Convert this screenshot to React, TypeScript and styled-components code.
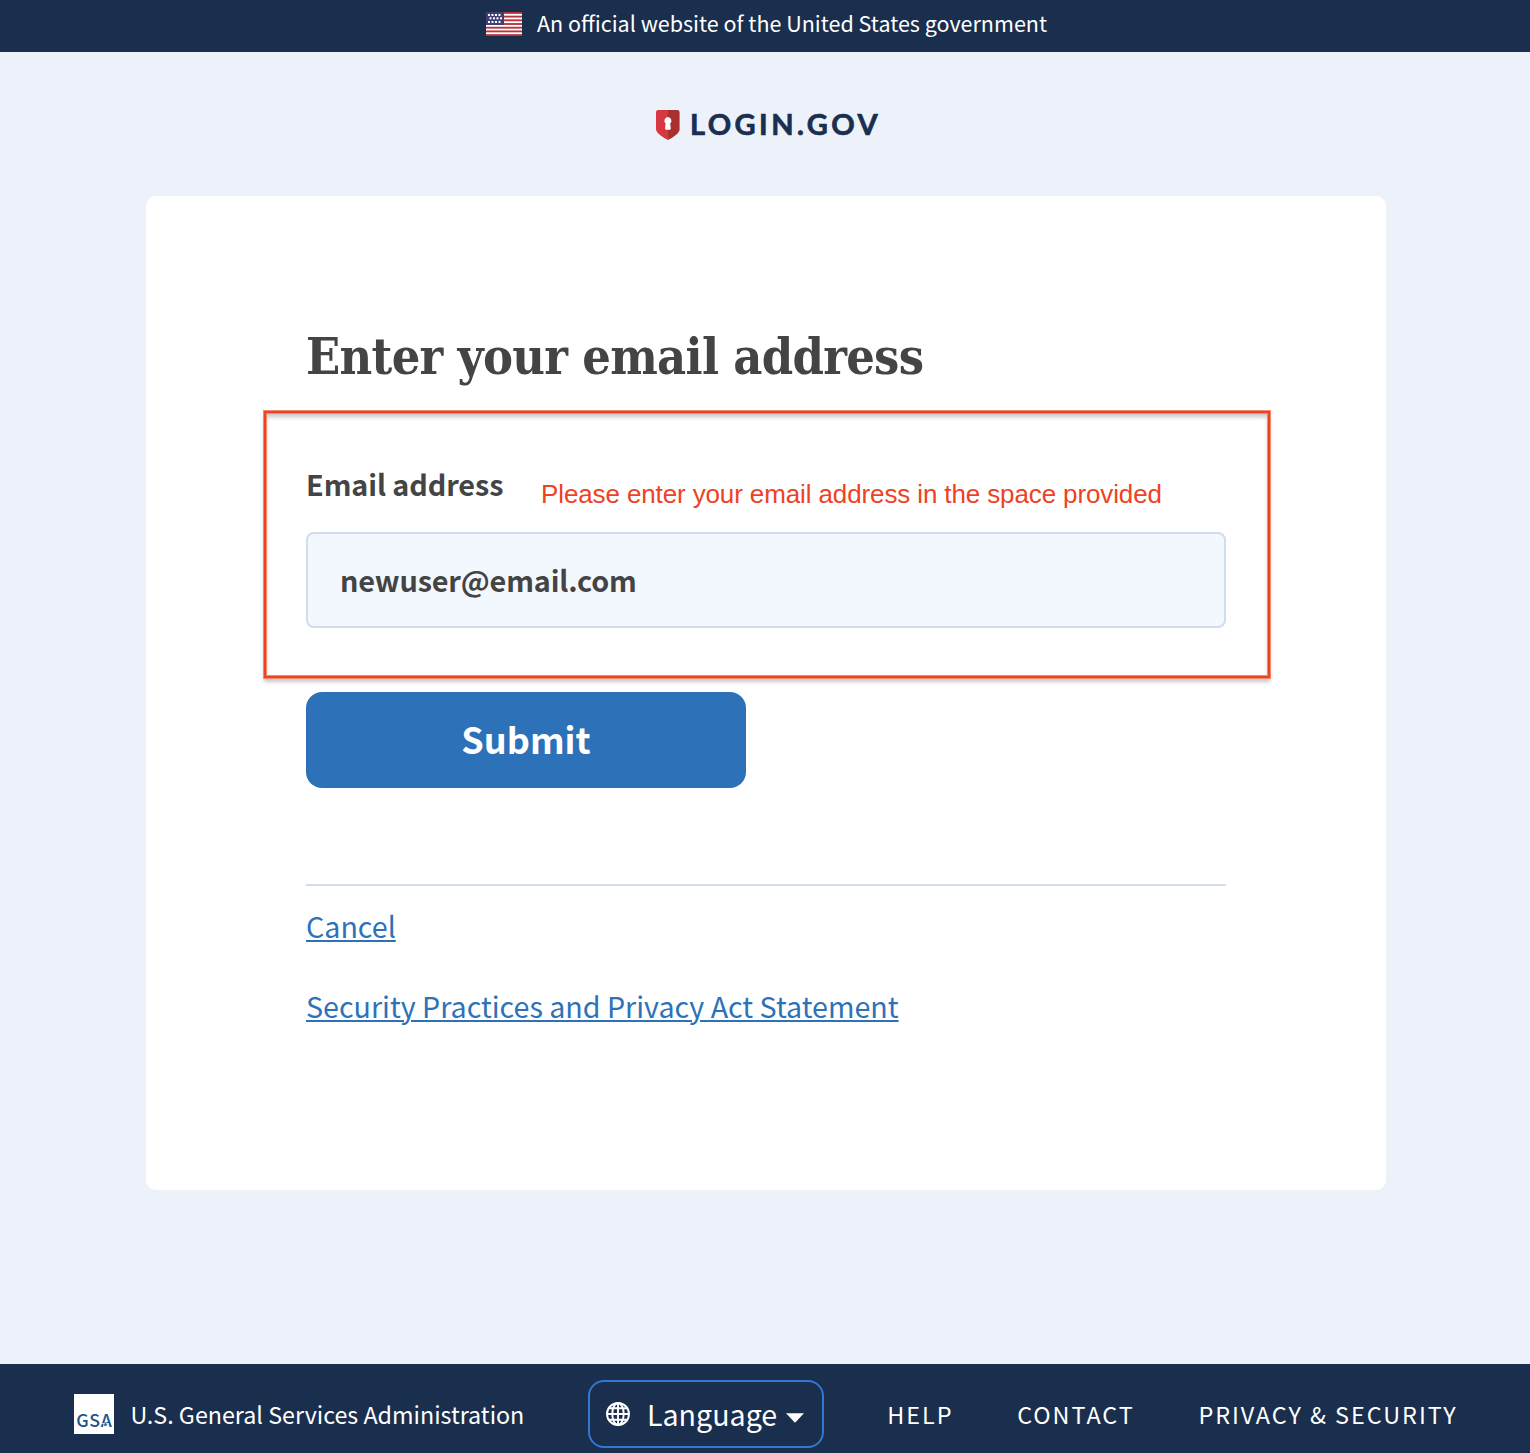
import React from 'react';
import styled, { createGlobalStyle } from 'styled-components';

const navy = '#1a2e4e';
const blue = '#2d72b8';
const alertRed = '#ee4224';
const sans = '"Noto Sans CJK SC", "Noto Sans", sans-serif';

const GlobalStyle = createGlobalStyle`
  *, *::before, *::after { box-sizing: border-box; }
  body { margin: 0; background: #edf2fa; overflow: hidden; }
`;

const Page = styled.div`
  display: flex;
  flex-direction: column;
  height: 1453px;
  overflow: hidden;
  background: #edf2fa;
  color: #444;
  font-family: ${sans};
`;

const Banner = styled.div`
  display: flex;
  flex: none;
  justify-content: center;
  gap: 15px;
  height: 52px;
  padding: 12px 0 0 3px;
  background: ${navy};
  color: #fff;
`;

const BannerText = styled.span`
  font-size: 21.5px;
  line-height: 22px;
  white-space: nowrap;
`;

const Brand = styled.header`
  display: flex;
  flex: none;
  justify-content: center;
  height: 144px;
  padding: 58px 0 0 7px;
`;

const Wordmark = styled.span`
  margin-left: 10px;
  color: #182f50;
  font-family: Lato, sans-serif;
  font-size: 29px;
  font-weight: 700;
  letter-spacing: 3.45px;
  line-height: 28px;
  -webkit-text-stroke: 0.7px #182f50;
`;

const Card = styled.main`
  flex: none;
  width: 1240px;
  height: 994px;
  margin-left: 146px;
  padding: 131px 160px 0;
  border-radius: 10px;
  background: #fff;
`;

const Title = styled.h1`
  margin: 0;
  font-family: "DejaVu Serif Condensed", "DejaVu Serif", serif;
  font-size: 50px;
  font-stretch: condensed;
  font-weight: 700;
  letter-spacing: -0.7px;
  line-height: 60px;
  white-space: nowrap;
`;

const FieldGroup = styled.section`
  width: 1006px;
  height: 267px;
  margin: 24px 0 14px -42px;
  padding: 51px 42px 0 40px;
  border: 2px solid ${alertRed};
  box-shadow:
    0 0 0 1px #f28a70,
    inset 0 0 0 1px #f28a70,
    0 4px 4px rgba(0, 0, 0, 0.22),
    inset 0 4px 4px rgba(0, 0, 0, 0.22);
`;

const LabelRow = styled.div`
  display: flex;
  align-items: flex-start;
  height: 68px;
`;

const Label = styled.label`
  width: 235px;
  font-size: 28.8px;
  font-weight: 700;
  letter-spacing: -0.08px;
  line-height: 40px;
`;

const Hint = styled.span`
  margin-top: 10px;
  color: ${alertRed};
  font-family: "Liberation Sans", Arial, sans-serif;
  font-size: 26px;
  letter-spacing: -0.12px;
  line-height: 40px;
  white-space: nowrap;
`;

const Input = styled.input`
  display: block;
  width: 920px;
  height: 96px;
  padding: 0 32px 2px;
  border: 2px solid #d1dcec;
  border-radius: 8px;
  outline: none;
  background: #f3f8ff;
  color: #444;
  font-family: ${sans};
  font-size: 28.8px;
  font-weight: 700;
  letter-spacing: -0.15px;
`;

const SubmitButton = styled.button`
  display: block;
  width: 440px;
  height: 96px;
  padding: 0 0 5px;
  border: 0;
  border-radius: 16px;
  background: ${blue};
  color: #fff;
  font-family: ${sans};
  font-size: 36px;
  font-weight: 700;
`;

const LinkList = styled.nav`
  display: flex;
  flex-direction: column;
  align-items: flex-start;
  gap: 40px;
  margin-top: 96px;
  padding-top: 20px;
  border-top: 2px solid #d1dcec;
`;

const TextLink = styled.a`
  color: ${blue};
  font-size: 28.65px;
  line-height: 40px;
  text-decoration: underline 2px;
  text-underline-offset: 2px;
`;

const Footer = styled.footer`
  display: flex;
  flex: none;
  align-items: flex-start;
  height: 89px;
  margin-top: auto;
  padding: 16px 0 0 74px;
  background: ${navy};
  color: #fff;
`;

const Agency = styled.div`
  display: flex;
  width: 514px;
  padding-top: 14px;
  gap: 16.5px;
  font-size: 23.28px;
  line-height: 40px;
`;

const LanguageButton = styled.button`
  display: flex;
  align-items: center;
  width: 236px;
  height: 68px;
  padding: 0 16px;
  border: 2px solid #3277d2;
  border-radius: 16px;
  background: transparent;
  color: #fff;
  font-family: ${sans};
  font-size: 28.6px;
  line-height: 64px;
`;

const LanguageText = styled.span`
  width: 139px;
  margin-left: 17px;
  text-align: left;
`;

const FooterLinks = styled.nav`
  display: flex;
  gap: 63.7px;
  padding: 14px 0 0 63.3px;
`;

const FooterLink = styled.a`
  color: #fff;
  font-size: 23.4px;
  letter-spacing: 1.96px;
  line-height: 40px;
  white-space: nowrap;
`;

const stripes = [0, 1, 2, 3, 4, 5, 6];
const starRows = [
  { y: 2, xs: [2, 5.5, 9, 12.5] },
  { y: 5.3, xs: [3.5, 7, 10.5, 14] },
  { y: 9, xs: [2, 5.5, 9, 12.5] },
];

const Flag = () => (
  <svg width="36" height="24" viewBox="0 0 36 24">
    <rect width="36" height="24" fill="#fff" />
    {stripes.map((n) => (
      <rect key={n} y={(n * 48) / 13} width="36" height={24 / 13} fill="#b7323c" />
    ))}
    <rect width="18" height="13" fill="#3f3f74" />
    {starRows.map((row) =>
      row.xs.map((x) => <rect key={`${row.y}-${x}`} x={x} y={row.y} width="2" height="2" fill="#fff" />),
    )}
  </svg>
);

const Shield = () => (
  <svg width="24" height="30" viewBox="0 0 24 30">
    <path d="M12 0H2.2Q0 0 0 2.2V20Q2 25 12 30Z" fill="#d73742" />
    <path d="M12 0H21.4Q23.6 0 23.6 2.2V20Q22 25 12 30Z" fill="#a9302d" />
    <path
      d="M11.9 7A3.7 3.7 0 0 0 9.6 13.4L9 18.6Q9 19.7 10 19.7H13.8Q14.8 19.7 14.8 18.6L14.2 13.4A3.7 3.7 0 0 0 11.9 7Z"
      fill="#fff"
    />
  </svg>
);

const GsaLogo = () => (
  <svg width="40" height="40" viewBox="0 0 40 40">
    <rect width="40" height="40" fill="#fff" />
    <text x="2.2" y="33.4" fill="#1f5288" fontFamily={sans} fontSize="17.8" fontWeight="500" textLength="35.6">
      GSA
    </text>
    <path d="M31.5 26.5L32.5 29H35.4L33.1 30.7L34 33.6L31.5 31.8L29 33.6L29.9 30.7L27.6 29H30.5Z" fill="#fff" />
    <path d="M31.5 28L32.1 29.7H33.8L32.4 30.8L32.9 32.5L31.5 31.4L30.1 32.5L30.6 30.8L29.2 29.7H30.9Z" fill="#1f5288" />
  </svg>
);

const Globe = () => (
  <svg width="24" height="24" viewBox="0 0 24 24" fill="none" stroke="#fff" strokeWidth="1.9">
    <circle cx="12" cy="12" r="11" />
    <ellipse cx="12" cy="12" rx="5.7" ry="11" />
    <path d="M12 1V23M1 12H23M3 6.3H21M3 17.7H21" />
  </svg>
);

const Caret = () => (
  <svg width="18" height="10" viewBox="0 0 18 10">
    <path d="M0 0.3H18L9 9.7Z" fill="#fff" />
  </svg>
);

const CaretSlot = styled.span`
  display: flex;
  padding-top: 7px;
`;

const GlobeSlot = styled.span`
  display: flex;
`;

export default function App() {
  return (
    <Page>
      <GlobalStyle />
      <Banner>
        <Flag />
        <BannerText>An official website of the United States government</BannerText>
      </Banner>
      <Brand>
        <Shield />
        <Wordmark>LOGIN.GOV</Wordmark>
      </Brand>
      <Card>
        <Title>Enter your email address</Title>
        <FieldGroup>
          <LabelRow>
            <Label htmlFor="email">Email address</Label>
            <Hint>Please enter your email address in the space provided</Hint>
          </LabelRow>
          <Input id="email" type="text" defaultValue="newuser@email.com" spellCheck={false} />
        </FieldGroup>
        <SubmitButton type="button">Submit</SubmitButton>
        <LinkList>
          <TextLink href="#cancel">Cancel</TextLink>
          <TextLink href="#privacy-act">Security Practices and Privacy Act Statement</TextLink>
        </LinkList>
      </Card>
      <Footer>
        <Agency>
          <GsaLogo />
          <span>U.S. General Services Administration</span>
        </Agency>
        <LanguageButton type="button">
          <GlobeSlot>
            <Globe />
          </GlobeSlot>
          <LanguageText>Language</LanguageText>
          <CaretSlot>
            <Caret />
          </CaretSlot>
        </LanguageButton>
        <FooterLinks>
          <FooterLink>HELP</FooterLink>
          <FooterLink>CONTACT</FooterLink>
          <FooterLink>PRIVACY &amp; SECURITY</FooterLink>
        </FooterLinks>
      </Footer>
    </Page>
  );
}
